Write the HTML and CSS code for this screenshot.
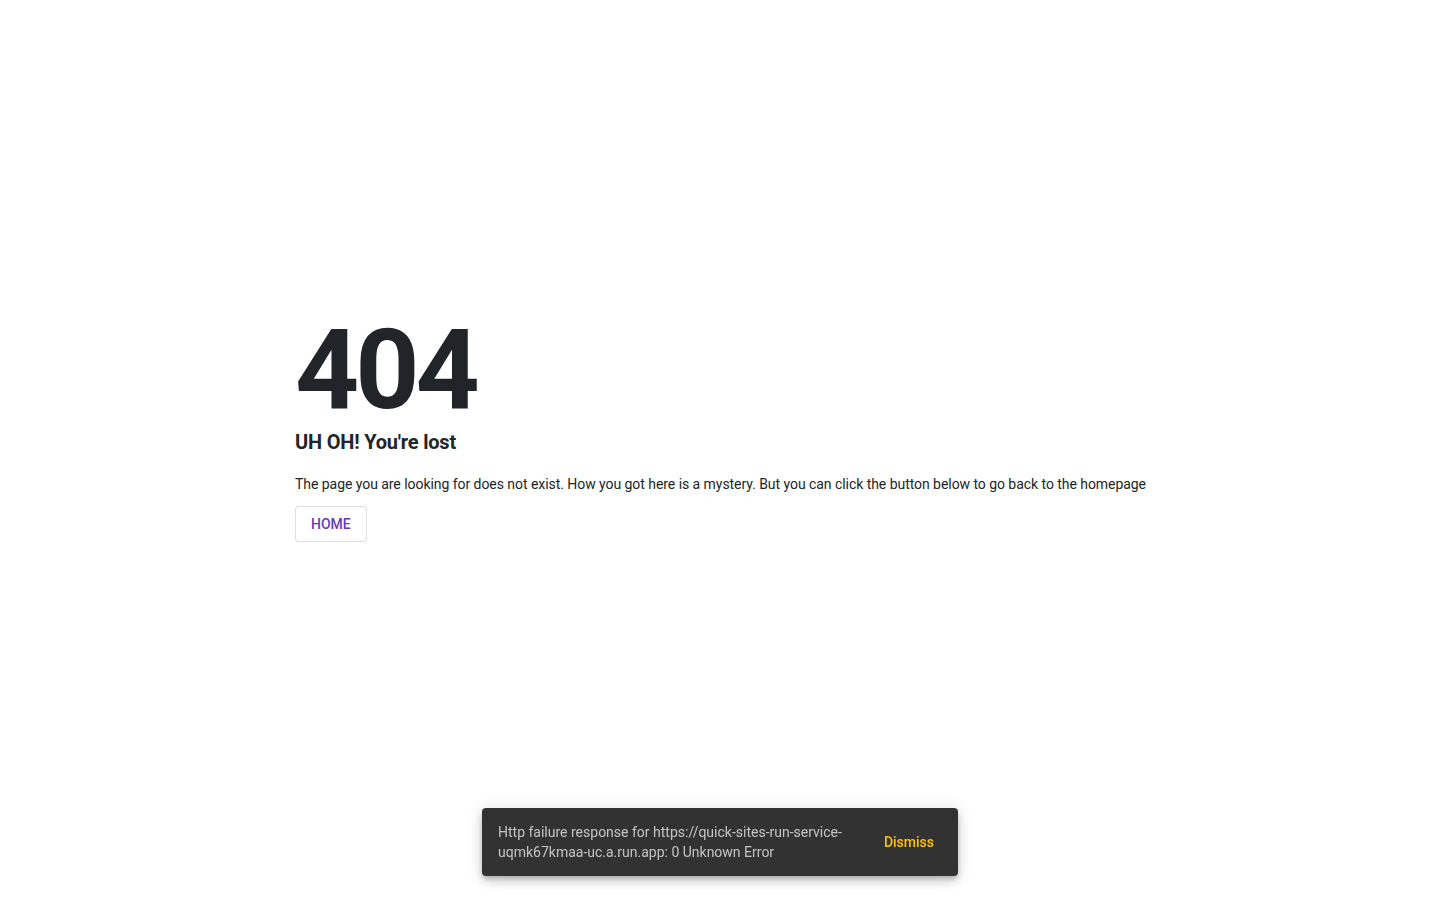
FILE: index.html
```html
<!DOCTYPE html>
<html>
<head>
<meta charset="utf-8">
<link rel="stylesheet" href="styles.css">
</head>
<body>
<main class="page">
  <section class="lost">
    <h1 class="code">404</h1>
    <h2 class="title">UH OH! You're lost</h2>
    <p class="text">The page you are looking for does not exist. How you got here is a mystery. But you can click the button below to go back to the homepage</p>
    <button class="home">HOME</button>
  </section>
</main>
<div class="snack">
  <span class="snack-msg">Http failure response for https://quick-sites-run-service-uqmk67kmaa-uc.a.run.app: 0 Unknown Error</span>
  <button class="snack-action">Dismiss</button>
</div>
</body>
</html>
```

FILE: styles.css
```css
html, body {
  margin: 0;
  padding: 0;
  height: 100%;
  background: #fff;
  font-family: Roboto, "Liberation Sans", sans-serif;
  color: #212529;
}
.page {
  height: 100%;
  display: flex;
  align-items: flex-start;
  padding-left: 295px;
  box-sizing: border-box;
}
.lost {
  margin-top: 314px;
  width: 870px;
}
.code {
  margin: 0;
  font-size: 112px;
  font-weight: 700;
  line-height: 1;
  letter-spacing: -4px;
  color: #212529;
}
.title {
  margin: 4px 0 0;
  font-size: 20px;
  font-weight: 700;
  line-height: 1.2;
  letter-spacing: -0.2px;
}
.text {
  margin: 20px 0 0;
  font-size: 14px;
  line-height: 20px;
  letter-spacing: -0.05px;
}
.home {
  margin-top: 12px;
  height: 36px;
  padding: 0 15px;
  background: #fff;
  border: 1px solid rgba(0,0,0,.12);
  border-radius: 4px;
  font-family: Roboto, "Liberation Sans", sans-serif;
  font-size: 14px;
  font-weight: 500;
  color: #673ab7;
  cursor: pointer;
}
.snack {
  position: fixed;
  left: 50%;
  bottom: 24px;
  transform: translateX(-50%);
  width: 476px;
  box-sizing: border-box;
  padding: 14px 16px;
  background: #323232;
  border-radius: 4px;
  box-shadow: 0 3px 5px -1px rgba(0,0,0,.2), 0 6px 10px 0 rgba(0,0,0,.14), 0 1px 18px 0 rgba(0,0,0,.12);
  display: flex;
  align-items: center;
  justify-content: space-between;
  font-size: 14px;
  line-height: 20px;
  color: rgba(255,255,255,.7);
}
.snack-msg {
  flex: 1;
  padding-right: 24px;
}
.snack-action {
  background: none;
  border: 0;
  padding: 0 8px;
  height: 36px;
  font-family: Roboto, "Liberation Sans", sans-serif;
  font-size: 14px;
  font-weight: 500;
  color: #ffc107;
}
```
